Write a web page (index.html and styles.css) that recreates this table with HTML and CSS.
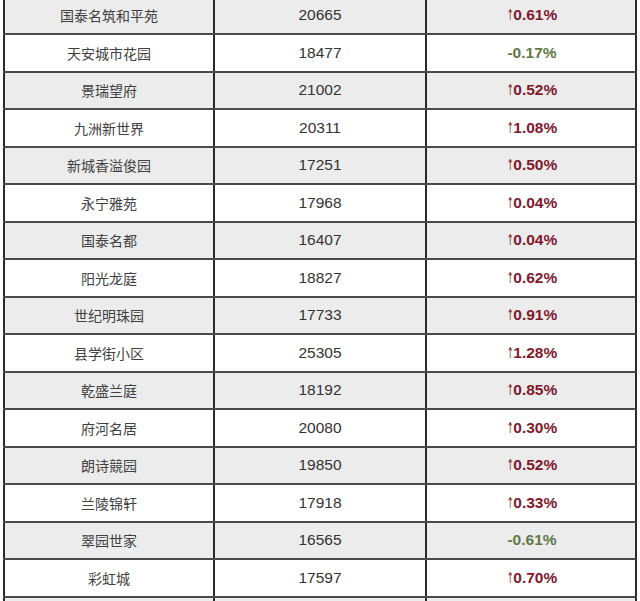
FILE: index.html
```html
<!DOCTYPE html>
<html lang="zh">
<head>
<meta charset="utf-8">
<link rel="stylesheet" href="styles.css">
</head>
<body>
<div class="viewport">
  <div class="table">
    <div class="row alt"><div class="cell name">国泰名筑和平苑</div><div class="cell num">20665</div><div class="cell pct up"><span class="arrow">↑</span>0.61%</div></div>
    <div class="row"><div class="cell name">天安城市花园</div><div class="cell num">18477</div><div class="cell pct down">-0.17%</div></div>
    <div class="row alt"><div class="cell name">景瑞望府</div><div class="cell num">21002</div><div class="cell pct up"><span class="arrow">↑</span>0.52%</div></div>
    <div class="row"><div class="cell name">九洲新世界</div><div class="cell num">20311</div><div class="cell pct up"><span class="arrow">↑</span>1.08%</div></div>
    <div class="row alt"><div class="cell name">新城香溢俊园</div><div class="cell num">17251</div><div class="cell pct up"><span class="arrow">↑</span>0.50%</div></div>
    <div class="row"><div class="cell name">永宁雅苑</div><div class="cell num">17968</div><div class="cell pct up"><span class="arrow">↑</span>0.04%</div></div>
    <div class="row alt"><div class="cell name">国泰名都</div><div class="cell num">16407</div><div class="cell pct up"><span class="arrow">↑</span>0.04%</div></div>
    <div class="row"><div class="cell name">阳光龙庭</div><div class="cell num">18827</div><div class="cell pct up"><span class="arrow">↑</span>0.62%</div></div>
    <div class="row alt"><div class="cell name">世纪明珠园</div><div class="cell num">17733</div><div class="cell pct up"><span class="arrow">↑</span>0.91%</div></div>
    <div class="row"><div class="cell name">县学街小区</div><div class="cell num">25305</div><div class="cell pct up"><span class="arrow">↑</span>1.28%</div></div>
    <div class="row alt"><div class="cell name">乾盛兰庭</div><div class="cell num">18192</div><div class="cell pct up"><span class="arrow">↑</span>0.85%</div></div>
    <div class="row"><div class="cell name">府河名居</div><div class="cell num">20080</div><div class="cell pct up"><span class="arrow">↑</span>0.30%</div></div>
    <div class="row alt"><div class="cell name">朗诗競园</div><div class="cell num">19850</div><div class="cell pct up"><span class="arrow">↑</span>0.52%</div></div>
    <div class="row"><div class="cell name">兰陵锦轩</div><div class="cell num">17918</div><div class="cell pct up"><span class="arrow">↑</span>0.33%</div></div>
    <div class="row alt"><div class="cell name">翠园世家</div><div class="cell num">16565</div><div class="cell pct down">-0.61%</div></div>
    <div class="row"><div class="cell name">彩虹城</div><div class="cell num">17597</div><div class="cell pct up"><span class="arrow">↑</span>0.70%</div></div>
    <div class="row alt"><div class="cell name"></div><div class="cell num"></div><div class="cell pct"></div></div>
  </div>
</div>
</body>
</html>
```

FILE: styles.css
```css
html, body {
  margin: 0;
  padding: 0;
  background: #ffffff;
}
.viewport {
  width: 640px;
  height: 601px;
  overflow: hidden;
}
.table {
  margin-left: 3px;
  margin-top: -2.5px;
  width: 634px;
  display: flex;
  flex-direction: column;
}
.row {
  display: grid;
  grid-template-columns: 210px 212px 210px;
  height: 37.5px;
  box-sizing: border-box;
  border-bottom: 2px solid #4a4a4a;
  border-right: 2px solid #2a2a2a;
  background: #ffffff;
}
.row.alt {
  background: #ececec;
}
.cell {
  display: flex;
  align-items: center;
  justify-content: center;
  border-left: 2px solid #2a2a2a;
  color: #3c3c3c;
}
.name {
  font-family: "Noto Sans CJK SC", "Noto Sans", sans-serif;
  font-size: 14px;
  color: #404040;
}
.num {
  font-family: "Liberation Sans", Arial, sans-serif;
  font-size: 15.5px;
  color: #333333;
}
.pct {
  font-family: "Liberation Sans", Arial, sans-serif;
  font-size: 15.5px;
  font-weight: bold;
  padding-left: 2px;
}
.up {
  color: #7e1a2a;
}
.down {
  color: #5e7a44;
}
.arrow {
  font-family: "DejaVu Sans", sans-serif;
  font-weight: normal;
  font-size: 15px;
  transform: scaleX(0.55);
  display: inline-block;
  margin: 0 -3px 0 -3px;
}
```
